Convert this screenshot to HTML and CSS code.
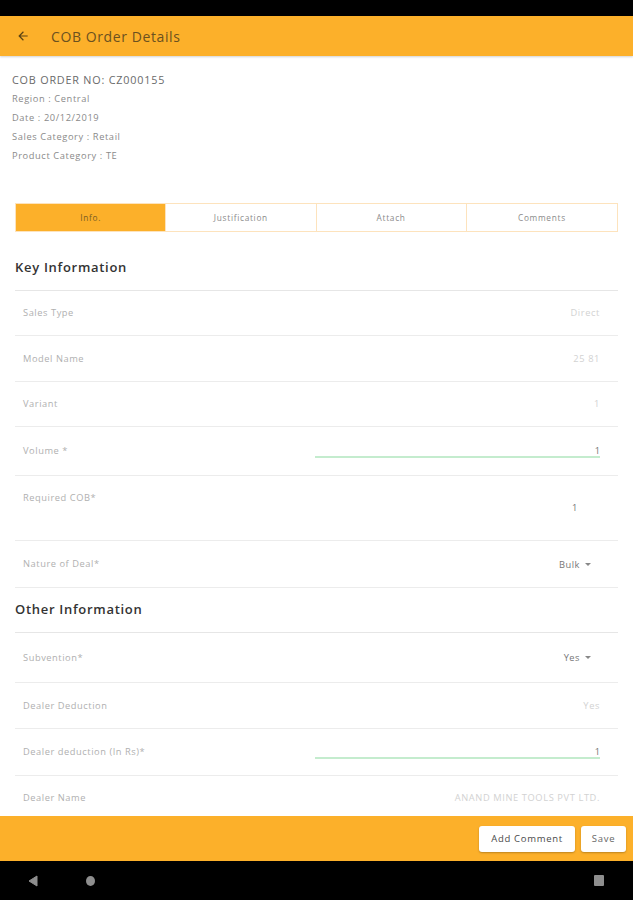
FILE: index.html
```html
<!DOCTYPE html>
<html>
<head>
<meta charset="utf-8">
<link rel="stylesheet" href="styles.css">
</head>
<body>
<div class="screen">
  <div class="status-bar"></div>
  <header class="app-bar">
    <svg class="back" width="14" height="14" viewBox="0 0 24 24"><path d="M20 11H7.83l5.59-5.59L12 4l-8 8 8 8 1.41-1.41L7.83 13H20v-2z" fill="#5a4314"/></svg>
    <span class="title">COB Order Details</span>
  </header>
  <main class="content">
    <section class="order-head">
      <div class="order-no">COB ORDER NO: CZ000155</div>
      <div class="meta">Region : Central</div>
      <div class="meta">Date : 20/12/2019</div>
      <div class="meta">Sales Category : Retail</div>
      <div class="meta">Product Category : TE</div>
    </section>

    <nav class="tabs">
      <div class="tab active">Info.</div>
      <div class="tab">Justification</div>
      <div class="tab">Attach</div>
      <div class="tab">Comments</div>
    </nav>

    <div class="list">
      <div class="section-title first">Key Information</div>
      <div class="row h45"><span class="label">Sales Type</span><span class="value ro">Direct</span></div>
      <div class="row h46"><span class="label">Model Name</span><span class="value ro">25 81</span></div>
      <div class="row h45"><span class="label">Variant</span><span class="value ro">1</span></div>
      <div class="row h49"><span class="label">Volume *</span><span class="input">1</span></div>
      <div class="row h65 top"><span class="label lbl-top">Required COB*</span><span class="value val-cob">1</span></div>
      <div class="row h47"><span class="label">Nature of Deal*</span><span class="select">Bulk <i class="caret"></i></span></div>
      <div class="section-title">Other Information</div>
      <div class="row h50"><span class="label">Subvention*</span><span class="select">Yes <i class="caret"></i></span></div>
      <div class="row h46"><span class="label">Dealer Deduction</span><span class="value ro">Yes</span></div>
      <div class="row h47"><span class="label">Dealer deduction (In Rs)*</span><span class="input">1</span></div>
      <div class="row h45"><span class="label">Dealer Name</span><span class="value ro">ANAND MINE TOOLS PVT LTD.</span></div>
    </div>
  </main>
  <footer class="action-bar">
    <button class="btn">Add Comment</button>
    <button class="btn">Save</button>
  </footer>
  <div class="nav-bar">
    <svg width="10" height="12" viewBox="0 0 10 12"><path d="M9 1 L1 6 L9 11 Z" fill="#8e8e8e" stroke="#8e8e8e" stroke-width="1" stroke-linejoin="round"/></svg>
    <span class="home"></span>
    <span class="spacer"></span>
    <span class="recent"></span>
  </div>
</div>
</body>
</html>
```

FILE: styles.css
```css
* { box-sizing: border-box; }
html, body { margin: 0; padding: 0; }
body {
  width: 633px;
  height: 900px;
  overflow: hidden;
  font-family: "Open Sans", Lato, sans-serif;
  background: #fff;
}
.screen {
  display: flex;
  flex-direction: column;
  height: 900px;
}
.status-bar {
  height: 16px;
  background: #000;
  flex: none;
}
.app-bar {
  height: 40px;
  flex: none;
  background: #fcb02a;
  display: flex;
  align-items: center;
  padding-left: 16px;
  box-shadow: 0 1px 2px rgba(0,0,0,0.18);
  position: relative;
  z-index: 1;
}
.back { margin-right: 21px; }
.title {
  font-size: 14px;
  color: #6b5120;
  letter-spacing: 0.6px;
}
.content {
  flex: 1;
  overflow: hidden;
  padding-top: 14px;
}
.order-head {
  padding-left: 12px;
  line-height: 19px;
}
.order-no {
  font-size: 10.8px;
  letter-spacing: 0.8px;
  color: #6a6a6a;
}
.meta {
  font-size: 9.3px;
  letter-spacing: 0.6px;
  color: #8a8a8a;
}
.tabs {
  margin: 38px 15px 0 15px;
  display: grid;
  grid-template-columns: repeat(4, 1fr);
  height: 29px;
  border: 1px solid #fde3bd;
}
.tab {
  display: flex;
  align-items: center;
  justify-content: center;
  font-size: 8.3px;
  letter-spacing: 0.7px;
  color: #8a8a8a;
  border-right: 1px solid #fde3bd;
}
.tab:last-child { border-right: none; }
.tab.active {
  background: #fcb02a;
  color: #7a5c24;
}
.list {
  margin: 14px 15px 0 15px;
}
.section-title {
  height: 45px;
  display: flex;
  align-items: center;
  padding-bottom: 3px;
  font-size: 13px;
  font-weight: 600;
  color: #333;
  letter-spacing: 0.7px;
  border-bottom: 1px solid #e6e6e6;
}
.row {
  display: flex;
  align-items: center;
  justify-content: space-between;
  padding: 0 18px 0 8px;
  border-bottom: 1px solid #ececec;
}
.row.top { align-items: flex-start; }
.h45 { height: 45px; }
.h46 { height: 46px; }
.h47 { height: 47px; }
.h49 { height: 49px; }
.h50 { height: 50px; }
.h65 { height: 65px; }
.label {
  font-size: 9.3px;
  letter-spacing: 0.55px;
  color: #b0b0b0;
  line-height: 14px;
}
.lbl-top { margin-top: 15px; }
.value {
  font-size: 9.3px;
  letter-spacing: 0.6px;
  line-height: 14px;
  color: #777;
}
.value.ro { color: #d2d2d2; }
.val-cob { margin-top: 25px; margin-right: 22px; }
.input {
  width: 285px;
  text-align: right;
  font-size: 9.3px;
  line-height: 11px;
  color: #777;
  border-bottom: 2px solid #c4ecce;
}
.select {
  font-size: 9.3px;
  letter-spacing: 0.5px;
  color: #777;
  margin-right: 9px;
  display: flex;
  align-items: center;
}
.caret {
  display: inline-block;
  margin-left: 5px;
  width: 0;
  height: 0;
  border-left: 3px solid transparent;
  border-right: 3px solid transparent;
  border-top: 3px solid #888;
}
.action-bar {
  height: 45px;
  flex: none;
  background: #fcb02a;
  display: flex;
  align-items: center;
  justify-content: flex-end;
  padding-right: 7px;
  gap: 6px;
}
.btn {
  height: 26px;
  background: #fff;
  border: none;
  border-radius: 3px;
  box-shadow: 0 1px 2px rgba(0,0,0,0.25);
  font-family: "Open Sans", sans-serif;
  font-size: 9.5px;
  letter-spacing: 0.7px;
  color: #4a4a4a;
  padding: 0;
  margin: 0;
}
.btn:first-child { width: 96px; }
.btn:last-child { width: 45px; color: #666; }
.nav-bar {
  height: 39px;
  flex: none;
  background: #000;
  display: flex;
  align-items: center;
  padding-left: 28px;
  padding-right: 29px;
}
.home {
  width: 9px;
  height: 10px;
  border-radius: 50%;
  background: #8e8e8e;
  margin-left: 48px;
}
.spacer { flex: 1; }
.recent {
  width: 10px;
  height: 11px;
  border-radius: 1px;
  background: #8e8e8e;
}
```
